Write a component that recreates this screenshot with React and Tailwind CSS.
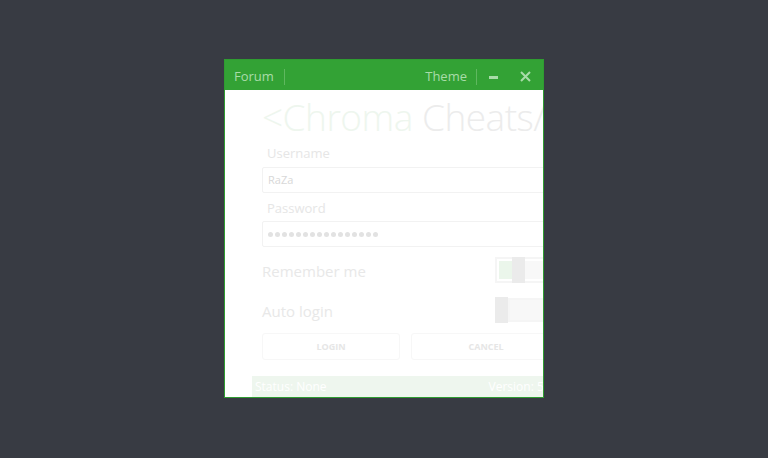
export default function App() {
  const font = { fontFamily: '"Open Sans", "Noto Sans", sans-serif' };
  return (
    <div className="w-[768px] h-[458px] bg-[#383b43] flex items-start justify-center" style={font}>
      <div className="mt-[59px] w-[320px] h-[339px] border border-[#2f9c31] bg-white flex flex-col overflow-hidden">
        <div className="h-[30px] shrink-0 bg-[#33a235] flex items-center text-[13px] text-[#a9dca9] pt-[3px]">
          <span className="ml-[9px]">Forum</span>
          <span className="ml-[10px] w-px h-[16px] bg-[#5fb85f]"></span>
          <span className="ml-auto">Theme</span>
          <span className="ml-[9px] w-px h-[16px] bg-[#5fb85f]"></span>
          <span className="ml-[12px] w-[9px] h-[3px] bg-[#a9dca9] mt-[1px]"></span>
          <svg className="ml-[22px] mr-[12px] -mt-[1px]" width="11" height="11" viewBox="0 0 11 11">
            <path d="M1 1 L10 10 M10 1 L1 10" stroke="#a9dca9" strokeWidth="2" />
          </svg>
        </div>
        <div className="flex-1 relative">
          <div className="pl-[37px] w-[360px]">
            <div className="mt-[2px] text-[37px] font-light leading-[50px] whitespace-nowrap tracking-[-0.5px]">
              <span className="text-[#eef6ee]">&lt;Chroma </span>
              <span className="text-[#ececec]">Cheats/&gt;</span>
            </div>
            <div className="mt-[3px] ml-[5px] text-[13px] text-[#e6e6e6] leading-[16px]">Username</div>
            <div className="mt-[6px] h-[26px] border border-[#f2f2f2] rounded-[2px] flex items-center pl-[5px] text-[11px] text-[#d8d8d8]">RaZa</div>
            <div className="mt-[7px] ml-[5px] text-[13px] text-[#e6e6e6] leading-[16px]">Password</div>
            <div className="mt-[5px] h-[26px] border border-[#f2f2f2] rounded-[2px] flex items-center pl-[5px] gap-[2px]">
              {Array.from({ length: 16 }).map((_, i) => (
                <span key={i} className="w-[5px] h-[5px] rounded-full bg-[#e2e2e2]"></span>
              ))}
            </div>
            <div className="mt-[10px] flex items-center h-[26px]">
              <span className="w-[233px] shrink-0 whitespace-nowrap text-[15px] text-[#e8e8e8] pt-[2px]">Remember me</span>
              <div className="shrink-0 h-[26px] w-[100px] border-[2px] border-[#f5f5f5] flex items-stretch">
                <div className="w-[13px] my-[2px] ml-[2px] bg-[#ebf6eb]"></div>
                <div className="w-[13px] -my-[2px] bg-[#ebebeb]"></div>
                <div className="flex-1 my-[2px] bg-[#f8f8f8]"></div>
              </div>
            </div>
            <div className="mt-[14px] flex items-center h-[26px]">
              <span className="w-[233px] shrink-0 whitespace-nowrap text-[15px] text-[#e8e8e8] pt-[2px]">Auto login</span>
              <div className="shrink-0 h-[26px] w-[100px] flex items-stretch">
                <div className="w-[13px] bg-[#ebebeb]"></div>
                <div className="flex-1 border-[2px] border-[#f5f5f5] my-[1px] bg-[#f8f8f8]"></div>
              </div>
            </div>
            <div className="mt-[10px] flex gap-[11px]">
              <div className="shrink-0 w-[138px] h-[27px] border border-[#f7f7f7] rounded-[3px] flex items-center justify-center text-[9px] font-bold text-[#e6e6e6]">LOGIN</div>
              <div className="shrink-0 w-[150px] h-[27px] border border-[#f7f7f7] rounded-[3px] flex items-center justify-center text-[9px] font-bold text-[#e6e6e6]">CANCEL</div>
            </div>
          </div>
          <div className="absolute left-[27px] bottom-0 w-[320px] h-[21px] bg-[#eef6ee] flex items-center text-[12px] text-white pl-[3px] whitespace-nowrap">
            <span>Status: None</span>
            <span className="ml-[162px]">Version: 5.0</span>
          </div>
        </div>
      </div>
    </div>
  );
}
